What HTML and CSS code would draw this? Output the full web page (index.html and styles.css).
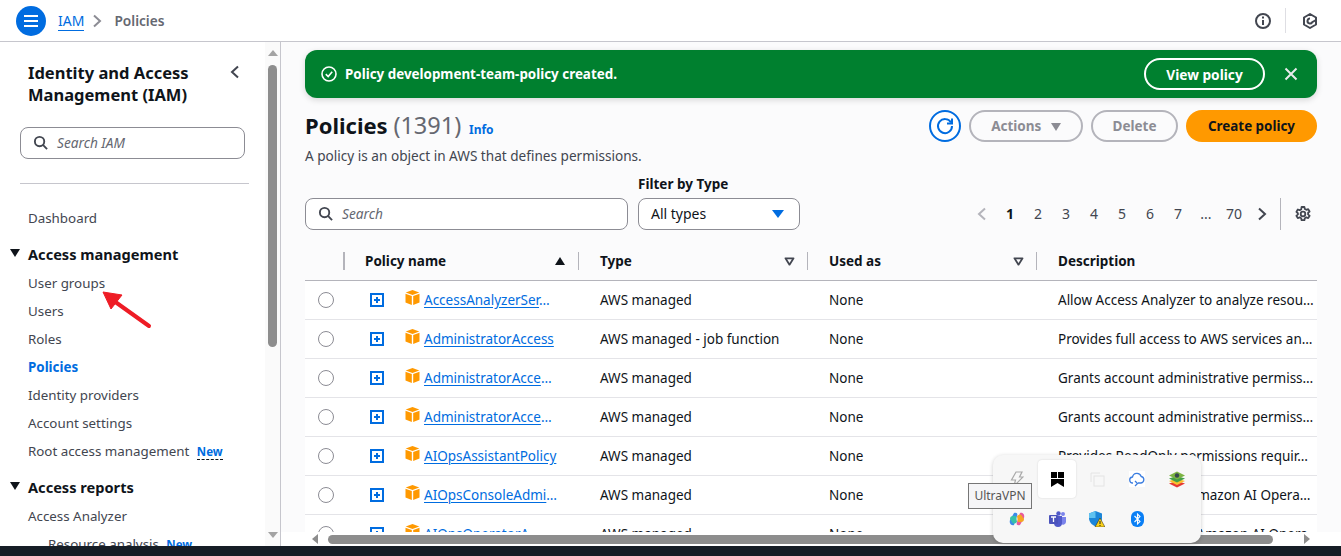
FILE: index.html
```html
<!DOCTYPE html>
<html lang="en">
<head>
  <meta charset="UTF-8" />
  <title>Policies | IAM</title>
  <link rel="stylesheet" href="styles.css">
</head>
<body>
  <svg class="defs" width="0" height="0">
    <symbol id="cube" viewBox="1 0.500 14 15">
      <path fill="#f90" d="M8 0.500 14.800 3 8 5.600 1.200 3z"/>
      <path fill="#f90" d="M1 4.200 7.300 6.600V15.500L1 13z"/>
      <path fill="#f90" d="M15 4.200 8.700 6.600V15.500L15 13z"/>
    </symbol>
    <symbol id="expand" viewBox="0 0 14 14">
      <rect x="1" y="1" width="12" height="12" fill="none" stroke="#006ce0" stroke-width="2"/>
      <path d="M7 4v6M4 7h6" stroke="#006ce0" stroke-width="2"/>
    </symbol>
    <symbol id="lens" viewBox="0 0 16 16">
      <circle cx="7" cy="7" r="5" fill="none" stroke="#424650" stroke-width="2"/>
      <path d="M10.600 10.600 15 15" stroke="#424650" stroke-width="2"/>
    </symbol>
    <symbol id="filter" viewBox="0 0 12 10">
      <path d="M1.500 1.500h9L6 8.500z" fill="none" stroke="#424650" stroke-width="2" stroke-linejoin="round"/>
    </symbol>
  </svg>

  <header class="topbar">
    <button class="menu-btn">
      <svg width="14" height="12" viewBox="0 0 14 12"><path d="M0 1h14M0 6h14M0 11h14" stroke="#fff" stroke-width="2"/></svg>
    </button>
    <a class="crumb-link">IAM</a>
    <svg class="crumb-sep" width="10" height="14" viewBox="0 0 10 14"><path d="M2 1.500 8 7 2 12.500" fill="none" stroke="#8c8c94" stroke-width="2"/></svg>
    <span class="crumb-here">Policies</span>
    <div class="top-icons">
      <svg width="16" height="16" viewBox="0 0 16 16"><circle cx="8" cy="8" r="7" fill="none" stroke="#424650" stroke-width="2"/><path d="M8 7v5M8 3.500v2" stroke="#424650" stroke-width="2"/></svg>
      <span class="top-divider"></span>
      <svg width="16" height="16" viewBox="0 0 16 16"><path d="M8 1 14 4.500V11.500L8 15 2 11.500V4.500z" fill="none" stroke="#424650" stroke-width="2" stroke-linejoin="round"/><path d="M8 5.500A2.500 2.500 0 1 0 10.200 9.200L14 7" fill="none" stroke="#424650" stroke-width="2"/></svg>
    </div>
  </header>

  <div class="layout">
    <aside class="sidebar">
      <div class="side-content">
        <div class="side-head">
          <h2>Identity and Access Management (IAM)</h2>
          <svg class="side-close" width="10" height="14" viewBox="0 0 10 14"><path d="M8 1.500 2 7l6 5.500" fill="none" stroke="#424650" stroke-width="2"/></svg>
        </div>
        <div class="search side-search">
          <svg width="15" height="15"><use href="#lens"/></svg>
          <span>Search IAM</span>
        </div>
        <hr class="side-rule">
        <a class="nav-item nav-first">Dashboard</a>
        <div class="nav-section"><span class="caret"></span>Access management</div>
        <a class="nav-item">User groups</a>
        <a class="nav-item">Users</a>
        <a class="nav-item">Roles</a>
        <a class="nav-item active">Policies</a>
        <a class="nav-item">Identity providers</a>
        <a class="nav-item">Account settings</a>
        <a class="nav-item">Root access management <span class="new-tag">New</span></a>
        <div class="nav-section"><span class="caret"></span>Access reports</div>
        <a class="nav-item">Access Analyzer</a>
        <a class="nav-item nav-sub">Resource analysis <span class="new-tag">New</span></a>
      </div>
      <div class="side-scroll">
        <span class="arrow-up"></span>
        <span class="side-thumb"></span>
        <span class="arrow-down"></span>
      </div>
    </aside>

    <main class="content">
      <div class="pad">
        <div class="flash">
          <svg width="16" height="16" viewBox="0 0 16 16"><circle cx="8" cy="8" r="7" fill="none" stroke="#fff" stroke-width="1.600"/><path d="M4.800 8.200 7.200 10.500 11.200 5.800" fill="none" stroke="#fff" stroke-width="1.600"/></svg>
          <span class="flash-text">Policy development-team-policy created.</span>
          <button class="flash-btn">View policy</button>
          <svg class="flash-x" width="14" height="14" viewBox="0 0 14 14"><path d="M1.500 1.500l11 11M12.500 1.500l-11 11" stroke="#e9ebed" stroke-width="2"/></svg>
        </div>

        <div class="title-row">
          <div>
            <h1>Policies <span class="count">(1391)</span> <a class="info">Info</a></h1>
          </div>
          <div class="actions">
            <button class="refresh">
              <svg width="20" height="20" viewBox="0 0 20 20"><path d="M16 6.500A7 7 0 1 0 17 10" fill="none" stroke="#006ce0" stroke-width="2"/><path d="M17 2.500V7.500H12" fill="none" stroke="#006ce0" stroke-width="2"/></svg>
            </button>
            <button class="btn-off btn-actions">Actions <span class="tri-grey"></span></button>
            <button class="btn-off btn-delete">Delete</button>
            <button class="btn-create">Create policy</button>
          </div>
        </div>
        <p class="desc">A policy is an object in AWS that defines permissions.</p>

        <div class="filter-row">
          <div class="search main-search">
            <svg width="15" height="15"><use href="#lens"/></svg>
            <span>Search</span>
          </div>
          <div class="filter-type">
            <label>Filter by Type</label>
            <div class="select">All types <span class="tri-blue"></span></div>
          </div>
          <div class="pager">
            <span class="pg"><svg width="10" height="14" viewBox="0 0 10 14"><path d="M8 1.500 2 7l6 5.500" fill="none" stroke="#b4b4bb" stroke-width="2"/></svg></span>
            <span class="pg pg-now">1</span><span class="pg">2</span><span class="pg">3</span><span class="pg">4</span><span class="pg">5</span><span class="pg">6</span><span class="pg">7</span><span class="pg">...</span><span class="pg">70</span>
            <span class="pg"><svg width="10" height="14" viewBox="0 0 10 14"><path d="M2 1.500 8 7l-6 5.500" fill="none" stroke="#424650" stroke-width="2"/></svg></span>
            <i class="pager-div"></i>
            <svg class="gear" width="16" height="16" viewBox="0 0 16 16"><circle cx="8" cy="8" r="2.300" fill="none" stroke="#424650" stroke-width="1.800"/><path d="M6.600 1h2.800l.4 2 1.500.8 1.900-.7 1.400 2.400-1.500 1.300v1.600l1.500 1.300-1.400 2.400-1.900-.7-1.500.8-.4 2H6.600l-.4-2-1.500-.8-1.900.7-1.400-2.400 1.500-1.300V7.200L1.400 5.900l1.400-2.400 1.900.7 1.500-.8z" fill="none" stroke="#424650" stroke-width="1.800" stroke-linejoin="round"/></svg>
          </div>
        </div>
      </div>

      <div class="table-wrap">
        <table class="policies">
          <colgroup><col class="c-radio"><col class="c-name"><col class="c-type"><col class="c-used"><col class="c-desc"></colgroup>
          <thead>
            <tr>
              <th></th>
              <th class="th-name"><span class="th-in">Policy name <span class="tri-sort"></span></span></th>
              <th><span class="th-in">Type <svg width="11" height="9"><use href="#filter"/></svg></span></th>
              <th><span class="th-in">Used as <svg width="11" height="9"><use href="#filter"/></svg></span></th>
              <th class="th-last"><span class="th-in">Description</span></th>
            </tr>
          </thead>
          <tbody>
            <tr>
              <td class="td-radio"><span class="radio"></span></td>
              <td class="td-name"><svg class="ic-exp" width="14" height="14"><use href="#expand"/></svg><svg class="ic-cube" width="15" height="15"><use href="#cube"/></svg><a class="pol"><u>AccessAnalyzerSer</u>…</a></td>
              <td>AWS managed</td><td>None</td>
              <td class="td-desc">Allow Access Analyzer to analyze resou…</td>
            </tr>
            <tr>
              <td class="td-radio"><span class="radio"></span></td>
              <td class="td-name"><svg class="ic-exp" width="14" height="14"><use href="#expand"/></svg><svg class="ic-cube" width="15" height="15"><use href="#cube"/></svg><a class="pol"><u>AdministratorAccess</u></a></td>
              <td>AWS managed - job function</td><td>None</td>
              <td class="td-desc">Provides full access to AWS services an…</td>
            </tr>
            <tr>
              <td class="td-radio"><span class="radio"></span></td>
              <td class="td-name"><svg class="ic-exp" width="14" height="14"><use href="#expand"/></svg><svg class="ic-cube" width="15" height="15"><use href="#cube"/></svg><a class="pol"><u>AdministratorAcce</u>…</a></td>
              <td>AWS managed</td><td>None</td>
              <td class="td-desc">Grants account administrative permiss…</td>
            </tr>
            <tr>
              <td class="td-radio"><span class="radio"></span></td>
              <td class="td-name"><svg class="ic-exp" width="14" height="14"><use href="#expand"/></svg><svg class="ic-cube" width="15" height="15"><use href="#cube"/></svg><a class="pol"><u>AdministratorAcce</u>…</a></td>
              <td>AWS managed</td><td>None</td>
              <td class="td-desc">Grants account administrative permiss…</td>
            </tr>
            <tr>
              <td class="td-radio"><span class="radio"></span></td>
              <td class="td-name"><svg class="ic-exp" width="14" height="14"><use href="#expand"/></svg><svg class="ic-cube" width="15" height="15"><use href="#cube"/></svg><a class="pol"><u>AIOpsAssistantPolicy</u></a></td>
              <td>AWS managed</td><td>None</td>
              <td class="td-desc">Provides ReadOnly permissions requir…</td>
            </tr>
            <tr>
              <td class="td-radio"><span class="radio"></span></td>
              <td class="td-name"><svg class="ic-exp" width="14" height="14"><use href="#expand"/></svg><svg class="ic-cube" width="15" height="15"><use href="#cube"/></svg><a class="pol"><u>AIOpsConsoleAdmi</u>…</a></td>
              <td>AWS managed</td><td>None</td>
              <td class="td-desc">Grants full access to Amazon AI Opera…</td>
            </tr>
            <tr>
              <td class="td-radio"><span class="radio"></span></td>
              <td class="td-name"><svg class="ic-exp" width="14" height="14"><use href="#expand"/></svg><svg class="ic-cube" width="15" height="15"><use href="#cube"/></svg><a class="pol"><u>AIOpsOperatorA</u>…</a></td>
              <td>AWS managed</td><td>None</td>
              <td class="td-desc">Grants user access to Amazon AI Opera…</td>
            </tr>
          </tbody>
        </table>
      </div>

      <div class="h-scroll">
        <span class="arrow-left"></span>
        <span class="h-thumb"></span>
        <span class="arrow-right"></span>
      </div>
    </main>
  </div>

  <div class="bottom-bar"></div>

  <!-- annotation arrow drawn on the screenshot -->
  <svg class="red-arrow" width="60" height="45" viewBox="0 0 60 45">
    <path d="M49 38 14 13" stroke="#ee1c25" stroke-width="4" stroke-linecap="round"/>
    <path d="M3 4 22 7 11 21z" fill="#ee1c25" stroke="#ee1c25" stroke-linejoin="round"/>
  </svg>

  <!-- windows tray popup -->
  <div class="tray">
    <span class="tray-cell">
      <svg width="14" height="16" viewBox="0 0 14 16"><path d="M6 1h6L9.500 6H13L4 15l1.500-6H1.500z" fill="none" stroke="#a9a9a9" stroke-width="1.200"/></svg>
    </span>
    <span class="tray-cell tray-on">
      <svg width="13" height="15" viewBox="0 0 13 15"><path d="M0 0h6v6H0zM7 0h6v6H7zM0 7h13v8L6.500 11 0 15z" fill="#000"/></svg>
    </span>
    <span class="tray-cell">
      <svg width="15" height="15" viewBox="0 0 15 15"><rect x="4" y="4" width="10" height="10" fill="none" stroke="#e4e4e4"/><path d="M1 10V1h9" fill="none" stroke="#e4e4e4"/></svg>
    </span>
    <span class="tray-cell">
      <svg width="16" height="16" viewBox="0 0 16 16"><rect width="16" height="16" fill="#fff"/><path d="M4 12a3 3 0 0 1-.5-6 4.500 4.500 0 0 1 8.700-.5A3.300 3.300 0 0 1 12 12H9" fill="none" stroke="#3b7de0" stroke-width="1.300"/><path d="M6 10l2.500 2.500L6 15" fill="none" stroke="#3b7de0" stroke-width="1.300"/></svg>
    </span>
    <span class="tray-cell">
      <svg width="16" height="17" viewBox="0 0 16 17"><path d="M8 10 16 12.500 8 16.500 0 12.500z" fill="#e53935"/><path d="M8 7.500 16 10 8 14 0 10z" fill="#fbc02d"/><path d="M8 5 16 7.500 8 11.500 0 7.500z" fill="#43a047"/><path d="M8 .5 16 4.500 8 8.500 0 4.500z" fill="#7cb342"/><circle cx="8" cy="4.500" r="2.200" fill="#37474f"/></svg>
    </span>
    <span class="tray-cell">
      <svg width="16" height="14" viewBox="0 0 16 14"><path d="M5 1c3-1 4 1 3 3L5 13C2 14 0 11 1 8z" fill="#3b8be8"/><path d="M11 13c-3 1-4-1-3-3l3-9c3-1 5 2 4 5z" fill="#e85a9c"/><path d="M8 4c2-2 4-2 5 0l2 3c0 2-1 3-3 3H9z" fill="#f5a623"/><path d="M8 10C6 12 4 12 3 10L1 7c0-2 1-3 3-3h3z" fill="#36c2a8"/></svg>
    </span>
    <span class="tray-cell">
      <svg width="17" height="16" viewBox="0 0 17 16"><circle cx="14" cy="3" r="2" fill="#7b83eb"/><circle cx="9.500" cy="2.500" r="2.200" fill="#5059c9"/><path d="M11 6h6v5a3 3 0 0 1-5 2z" fill="#7b83eb"/><path d="M4 5h9v7a4 4 0 0 1-8 0z" fill="#5059c9"/><rect y="4" width="9" height="9" rx="1" fill="#4b53bc"/><path d="M2 6h5M4.500 6v5" stroke="#fff" stroke-width="1.300"/></svg>
    </span>
    <span class="tray-cell">
      <svg width="16" height="16" viewBox="0 0 16 16"><path d="M6.500 0 13 2.500V7c0 4-3 7-6.500 8.500C3 14 0 11 0 7V2.500z" fill="#1c86d8"/><path d="M6.500 0 0 2.500V7l6.500 0z" fill="#5fc2f0"/><path d="M11 7 16 16H6z" fill="#fcd116" stroke="#222" stroke-width=".5"/><path d="M11 10v3M11 14v1" stroke="#222" stroke-width="1"/></svg>
    </span>
    <span class="tray-cell">
      <svg width="13" height="16" viewBox="0 0 13 16"><rect width="13" height="16" rx="6" fill="#0a7ff5"/><path d="M3.500 5 9 10.500 6.500 13V3L9 5.500 3.500 11" fill="none" stroke="#fff" stroke-width="1.100"/></svg>
    </span>
  </div>
  <div class="tooltip">UltraVPN</div>
</body>
</html>
```
FILE: styles.css
```css
* {
  box-sizing: border-box;
}
html, body {
  height: 100%;
}
body {
  margin: 0;
  font-family: "Noto Sans", sans-serif;
  font-size: 14px;
  color: #0f141a;
  background: #fff;
  overflow: hidden;
  display: flex;
  flex-direction: column;
}
button {
  font-family: inherit;
}
.defs {
  position: absolute;
}

/* top bar */
.topbar {
  height: 42px;
  flex: none;
  display: flex;
  align-items: center;
  padding-left: 16px;
  border-bottom: 1px solid #c6c6cd;
  background: #fff;
}
.menu-btn {
  width: 30px;
  height: 30px;
  border: none;
  border-radius: 50%;
  background: #006ce0;
  padding: 0;
  margin-right: 12px;
  display: flex;
  align-items: center;
  justify-content: center;
}
.crumb-link {
  color: #006ce0;
  border-bottom: 1px solid #006ce0;
  line-height: 19px;
}
.crumb-sep {
  margin: 0 12px 0 8px;
}
.crumb-here {
  color: #656871;
  font-weight: 600;
  font-size: 13.700px;
}
.top-icons {
  margin-left: auto;
  margin-right: 23px;
  display: flex;
  align-items: center;
}
.top-divider {
  width: 1px;
  height: 25px;
  background: #dedee3;
  margin: 0 16px 0 14px;
}

.layout {
  flex: 1;
  display: flex;
  min-height: 0;
}

/* left nav */
.sidebar {
  width: 281px;
  flex: none;
  display: flex;
  border-right: 1px solid #c6c6cd;
  overflow: hidden;
  background: #fff;
}
.side-content {
  width: 265px;
  flex: none;
  padding: 20px 0 0 0;
}
.side-head {
  display: flex;
  justify-content: space-between;
  padding: 0 25px 0 28px;
}
.side-head h2 {
  margin: 0;
  font-size: 16.500px;
  line-height: 22px;
  font-weight: 700;
  width: 180px;
}
.side-close {
  margin-top: 3px;
}
.search {
  display: flex;
  align-items: center;
  gap: 9px;
  height: 32px;
  padding-bottom: 1px;
  border: 1px solid #8c8c94;
  border-radius: 8px;
  background: #fff;
  color: #656871;
  font-style: italic;
  font-size: 13.700px;
  padding-left: 12px;
}
.side-search {
  width: 225px;
  margin: 21px 0 0 20px;
}
.side-rule {
  width: 229px;
  margin: 24px 0 0 20px;
  border: none;
  border-top: 1px solid #c6c6cd;
}
.nav-item {
  display: block;
  height: 28px;
  line-height: 28px;
  padding-left: 28px;
  color: #424650;
  white-space: nowrap;
  font-size: 13.350px;
}
.nav-first {
  margin-top: 20px;
}
.nav-item.active {
  color: #006ce0;
  font-weight: 700;
}
.nav-sub {
  padding-left: 48px;
}
.nav-section {
  position: relative;
  height: 30px;
  line-height: 30px;
  margin-top: 7px;
  padding-left: 28px;
  font-size: 14.600px;
  font-weight: 700;
  color: #0f141a;
}
.caret {
  position: absolute;
  left: 10px;
  top: 10px;
  border-left: 5px solid transparent;
  border-right: 5px solid transparent;
  border-top: 8px solid #0f141a;
}
.new-tag {
  color: #006ce0;
  font-size: 11.500px;
  font-weight: 700;
  margin-left: 4px;
  border-bottom: 1px dashed #0f141a;
}
.side-scroll {
  width: 15px;
  background: #fafafa;
  position: relative;
  display: flex;
  flex-direction: column;
  align-items: center;
}
.arrow-up {
  margin-top: 8px;
  border-left: 5px solid transparent;
  border-right: 5px solid transparent;
  border-bottom: 6px solid #a3a3a3;
}
.side-thumb {
  width: 9px;
  height: 282px;
  margin-top: 9px;
  border-radius: 5px;
  background: #8d8d8d;
}
.arrow-down {
  margin-top: auto;
  margin-bottom: 8px;
  border-left: 5px solid transparent;
  border-right: 5px solid transparent;
  border-top: 6px solid #a3a3a3;
}

/* main area */
.content {
  flex: 1;
  min-width: 0;
  display: flex;
  flex-direction: column;
  background: #fbfbfc;
}
.pad {
  padding: 8px 24px 0 24px;
}
.flash {
  height: 48px;
  display: flex;
  align-items: center;
  padding: 0 19px 0 16px;
  background: #00802f;
  border-radius: 12px;
  box-shadow: 0 2px 6px rgba(0, 0, 0, .15);
  color: #fff;
}
.flash-text {
  margin-left: 8px;
  font-weight: 700;
  font-size: 13.400px;
  flex: 1;
}
.flash-btn {
  width: 121px;
  height: 32px;
  border: 2px solid #fff;
  border-radius: 16px;
  background: transparent;
  color: #fff;
  font-size: 13.700px;
  font-weight: 700;
  padding: 0;
}
.flash-x {
  margin-left: 19px;
}
.title-row {
  display: flex;
  justify-content: space-between;
  align-items: flex-start;
  margin-top: 12px;
}
h1 {
  margin: 0;
  font-size: 22px;
  line-height: 30px;
  font-weight: 700;
  color: #0f141a;
}
.count {
  font-weight: 400;
  font-size: 23.500px;
  color: #656871;
}
.info {
  font-size: 12px;
  font-weight: 700;
  color: #006ce0;
  margin-left: 2px;
}
.actions {
  display: flex;
  align-items: center;
}
.refresh {
  width: 32px;
  height: 32px;
  border: 2px solid #006ce0;
  border-radius: 50%;
  background: #fff;
  padding: 0;
  margin-right: 8px;
  display: flex;
  align-items: center;
  justify-content: center;
}
.btn-off {
  height: 32px;
  border: 2px solid #b4b4bb;
  border-radius: 16px;
  background: transparent;
  color: #8c8c94;
  font-size: 13.500px;
  font-weight: 700;
  padding: 0 0 1px 0;
}
.btn-actions {
  width: 114px;
  margin-right: 8px;
}
.btn-delete {
  width: 87px;
  margin-right: 8px;
}
.tri-grey {
  display: inline-block;
  margin-left: 6px;
  border-left: 5.500px solid transparent;
  border-right: 5.500px solid transparent;
  border-top: 8px solid #8c8c94;
}
.btn-create {
  width: 131px;
  height: 32px;
  border: none;
  border-radius: 16px;
  background: #ff9900;
  color: #0f141a;
  font-size: 13.400px;
  font-weight: 700;
  padding: 0 0 1px 0;
}
.desc {
  margin: 1px 0 0 0;
  font-size: 13.600px;
  line-height: 20px;
  color: #424650;
}
.filter-row {
  display: flex;
  align-items: flex-end;
  margin-top: 9px;
}
.main-search {
  width: 323px;
  margin-right: 10px;
}
.filter-type label {
  display: block;
  font-weight: 700;
  font-size: 13.500px;
  line-height: 18px;
  margin-bottom: 5px;
}
.select {
  width: 162px;
  height: 32px;
  padding: 0 15px 1px 12px;
  border: 1px solid #8c8c94;
  border-radius: 8px;
  background: #fff;
  display: flex;
  align-items: center;
  justify-content: space-between;
  color: #0f141a;
}
.tri-blue {
  border-left: 6px solid transparent;
  border-right: 6px solid transparent;
  border-top: 8px solid #006ce0;
}
.pager {
  margin-left: auto;
  height: 32px;
  display: flex;
  align-items: center;
  color: #424650;
  font-size: 14px;
}
.pg {
  width: 28px;
  text-align: center;
  display: flex;
  align-items: center;
  justify-content: center;
  padding-bottom: 1px;
}
.pg-now {
  color: #0f141a;
  font-weight: 700;
}
.pager-div {
  width: 1px;
  height: 32px;
  background: #b4b4bb;
  margin: 0 14px 0 4px;
}
.gear {
  margin-right: 6px;
}

/* table */
.table-wrap {
  flex: 1;
  min-height: 0;
  overflow: hidden;
  margin: 13px 24px 0 24px;
}
.policies {
  width: 1012px;
  table-layout: fixed;
  border-collapse: collapse;
  background: #fff;
}
.c-radio { width: 39px; }
.c-name { width: 235px; }
.c-type { width: 229px; }
.c-used { width: 229px; }
.c-desc { width: 280px; }
.policies th {
  height: 37px;
  padding: 0;
  text-align: left;
  font-size: 13.500px;
  font-weight: 700;
  background: #fbfbfc;
  color: #0f141a;
  border-bottom: 1px solid #b4b4bb;
}
.th-in {
  display: flex;
  align-items: center;
  justify-content: space-between;
  height: 18px;
  margin-right: -1px;
  padding: 0 12px 0 21px;
  border-right: 2px solid #b4b4bb;
}
.th-name .th-in {
  padding: 0 13px 0 20px;
}
.th-last .th-in {
  border-right: none;
}
thead th:nth-child(2) .th-in {
  border-left: 2px solid #b4b4bb;
  margin-left: -1px;
}
.tri-sort {
  border-left: 5.500px solid transparent;
  border-right: 5.500px solid transparent;
  border-bottom: 8px solid #0f141a;
}
.policies td {
  height: 39px;
  padding: 0 0 0 21px;
  border-bottom: 1px solid #e4e4e8;
  white-space: nowrap;
  overflow: hidden;
  font-size: 13.500px;
  color: #0f141a;
}
.policies .td-radio {
  padding: 0 0 0 13px;
}
.radio {
  display: block;
  width: 16px;
  height: 16px;
  border: 1px solid #8c8c94;
  border-radius: 50%;
  background: #fff;
}
.policies .td-name {
  padding-left: 26px;
}
.ic-exp {
  vertical-align: -2px;
  margin-right: 21px;
}
.ic-cube {
  vertical-align: top;
  margin: -1px 4px 0 0;
}
.pol {
  color: #006ce0;
}
.pol u {
  text-underline-offset: 2px;
}

.h-scroll {
  height: 14px;
  flex: none;
  display: flex;
  align-items: center;
  background: #fff;
  padding: 0 31px 0 31px;
}
.arrow-left {
  border-top: 5px solid transparent;
  border-bottom: 5px solid transparent;
  border-right: 6px solid #8d8d8d;
}
.h-thumb {
  width: 945px;
  height: 9px;
  margin-left: 10px;
  border-radius: 5px;
  background: #8d8d8d;
}
.arrow-right {
  margin-left: auto;
  border-top: 5px solid transparent;
  border-bottom: 5px solid transparent;
  border-left: 6px solid #8d8d8d;
}
.bottom-bar {
  height: 10px;
  flex: none;
  background: #161d26;
}

/* overlays */
.red-arrow {
  position: absolute;
  left: 100px;
  top: 288px;
}
.tray {
  position: absolute;
  left: 993px;
  top: 455px;
  width: 208px;
  height: 88px;
  padding: 5px 0 0 5px;
  background: #f7f7f7;
  border-radius: 10px;
  box-shadow: 0 1px 4px rgba(0, 0, 0, .2);
  display: grid;
  grid-template-columns: repeat(5, 40px);
  grid-auto-rows: 40px;
}
.tray-cell {
  display: flex;
  align-items: center;
  justify-content: center;
  width: 38px;
  height: 38px;
  border-radius: 4px;
}
.tray-on {
  background: #fff;
  box-shadow: 0 0 2px rgba(0, 0, 0, .15);
}
.tooltip {
  position: absolute;
  left: 968px;
  top: 483px;
  width: 64px;
  height: 26px;
  line-height: 24px;
  text-align: center;
  font-size: 12px;
  color: #555;
  background: #f5f5f7;
  border: 1px solid #767676;
}
```
